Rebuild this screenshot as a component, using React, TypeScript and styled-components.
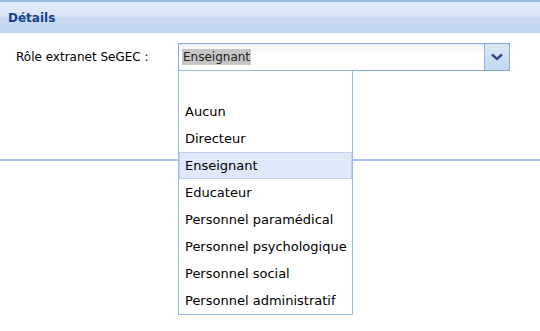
import styled, { createGlobalStyle } from "styled-components";

const GlobalStyle = createGlobalStyle`
  html, body {
    margin: 0;
    padding: 0;
    background: #ffffff;
  }
  body {
    font-family: "DejaVu Sans", "Liberation Sans", sans-serif;
    font-size: 12px;
    color: #000000;
  }
`;

const Page = styled.div`
  width: 540px;
  height: 331px;
  position: relative;
  overflow: hidden;
`;

const PanelHeader = styled.div`
  height: 31px;
  border-top: 2px solid #99bbe8;
  background: linear-gradient(to bottom, #e3ecf8 0%, #d9e5f5 45%, #c9daf1 50%, #c2d5f0 100%);
  display: flex;
  align-items: center;
  padding-left: 8px;
  font-weight: bold;
  font-size: 12px;
  color: #15428b;
`;

const PanelBody = styled.div`
  height: 128px;
  border-bottom: 2px solid #a8c4ea;
  padding: 10px 0 0 16px;
  box-sizing: border-box;
`;

const FormRow = styled.div`
  display: flex;
  align-items: center;
`;

const Label = styled.label`
  width: 162px;
  font-size: 12px;
  color: #000;
`;

const Combo = styled.div`
  position: relative;
  display: flex;
  width: 332px;
  height: 28px;
  box-sizing: border-box;
  border: 1px solid #7fa9d9;
`;

const ComboInput = styled.div`
  flex: 1;
  display: flex;
  align-items: center;
  padding-left: 3px;
  background: linear-gradient(to bottom, #f0f0f0 0%, #ffffff 40%);
`;

const Selected = styled.span`
  background: #c6c6c6;
  color: #222;
  font-size: 12px;
  line-height: 16px;
  padding: 0 1px;
`;

const Trigger = styled.div`
  width: 24px;
  border-left: 1px solid #8fb2df;
  background: linear-gradient(to bottom, #dbe7f6 0%, #c3d7f0 100%);
  display: flex;
  align-items: center;
  justify-content: center;
`;

const List = styled.ul`
  position: absolute;
  left: -1px;
  top: 26px;
  width: 175px;
  margin: 0;
  padding: 0;
  list-style: none;
  background: #ffffff;
  border: 1px solid #99bbe8;
  box-sizing: border-box;
  z-index: 2;
`;

const Item = styled.li<{ $active?: boolean }>`
  height: 27px;
  box-sizing: border-box;
  display: flex;
  align-items: center;
  padding-left: 5px;
  font-size: 13px;
  white-space: nowrap;
  color: #000;
  border: 1px dotted ${(p) => (p.$active ? "#a3bae9" : "transparent")};
  background: ${(p) => (p.$active ? "#dfe8f6" : "transparent")};
`;

const roles = [
  "",
  "Aucun",
  "Directeur",
  "Enseignant",
  "Educateur",
  "Personnel paramédical",
  "Personnel psychologique",
  "Personnel social",
  "Personnel administratif",
];

export default function App() {
  const current = "Enseignant";
  return (
    <>
      <GlobalStyle />
      <Page>
        <PanelHeader>Détails</PanelHeader>
        <PanelBody>
          <FormRow>
            <Label>Rôle extranet SeGEC :</Label>
            <Combo>
              <ComboInput>
                <Selected>{current}</Selected>
              </ComboInput>
              <Trigger>
                <svg width="12" height="8" viewBox="0 0 12 8">
                  <path d="M1 1.5 L6 6 L11 1.5" fill="none" stroke="#2c4f85" strokeWidth="2.4" />
                </svg>
              </Trigger>
              <List>
                {roles.map((r, i) => (
                  <Item key={i} $active={r === current}>
                    {r}
                  </Item>
                ))}
              </List>
            </Combo>
          </FormRow>
        </PanelBody>
      </Page>
    </>
  );
}
